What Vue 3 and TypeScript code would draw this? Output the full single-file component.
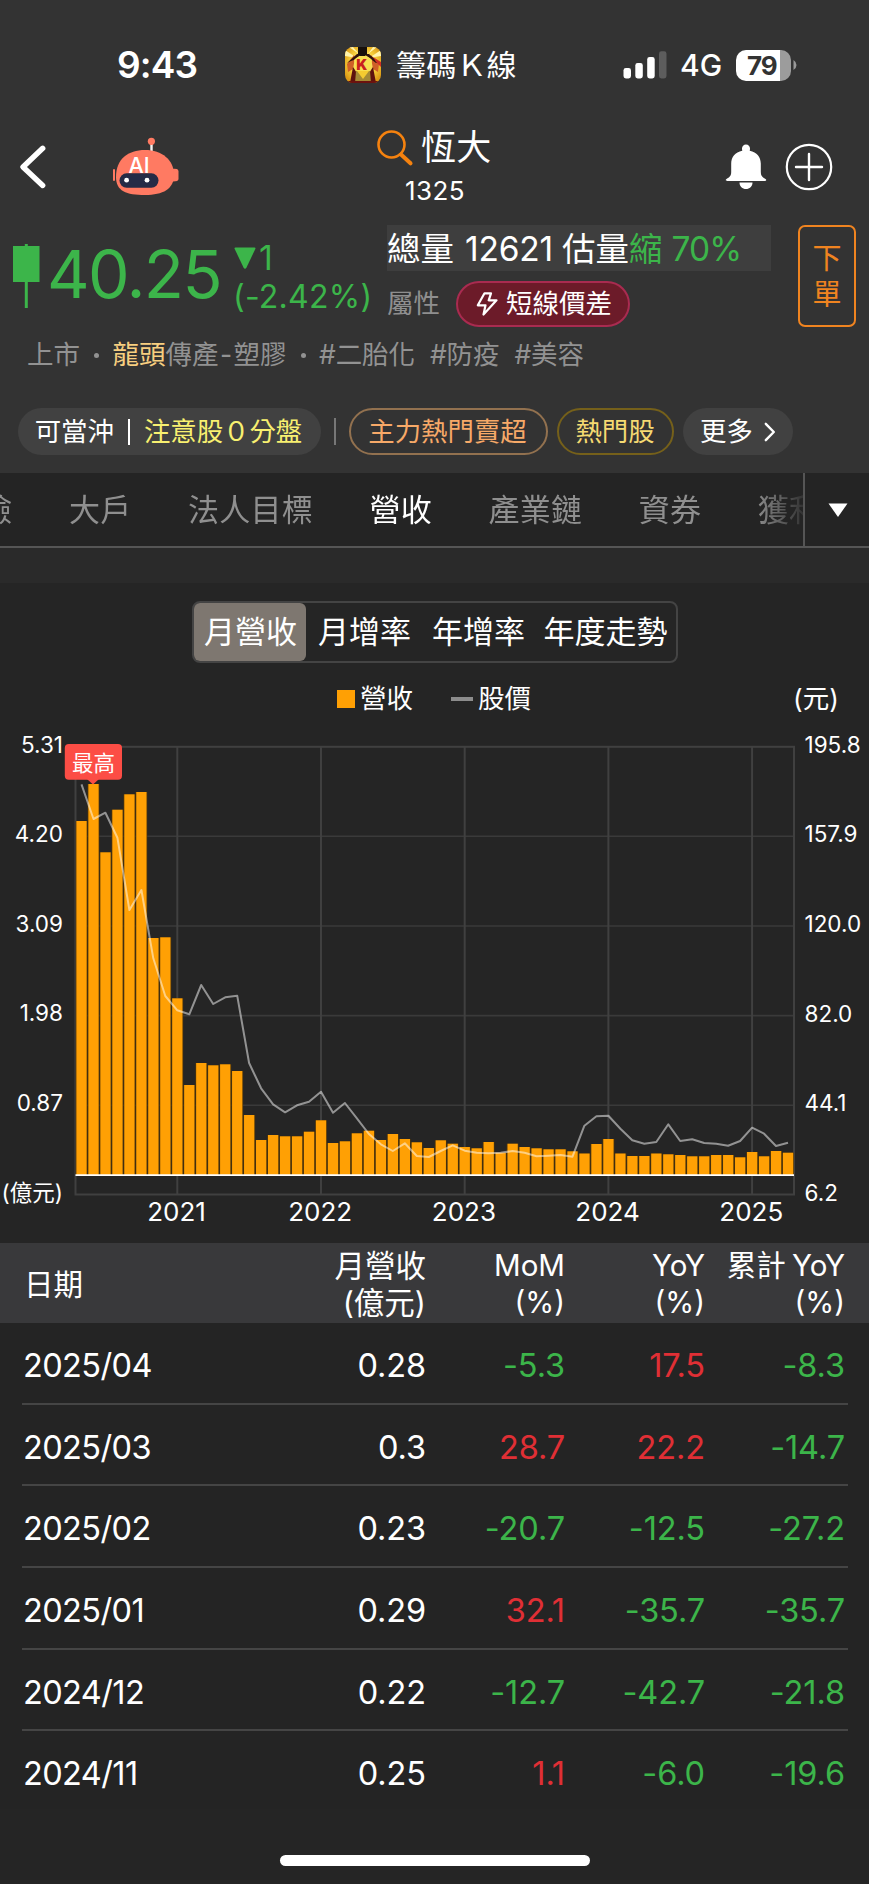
<script setup lang="ts">
interface Row {
  date: string
  revenue: string
  mom: string
  yoy: string
  total: string
}

const rows: Row[] = [
  { date: '2025/04', revenue: '0.28', mom: '-5.3', yoy: '17.5', total: '-8.3' },
  { date: '2025/03', revenue: '0.3', mom: '28.7', yoy: '22.2', total: '-14.7' },
  { date: '2025/02', revenue: '0.23', mom: '-20.7', yoy: '-12.5', total: '-27.2' },
  { date: '2025/01', revenue: '0.29', mom: '32.1', yoy: '-35.7', total: '-35.7' },
  { date: '2024/12', revenue: '0.22', mom: '-12.7', yoy: '-42.7', total: '-21.8' },
  { date: '2024/11', revenue: '0.25', mom: '1.1', yoy: '-6.0', total: '-19.6' },
]

const tone = (v: string): string => (v.startsWith('-') ? 'down' : 'up')

// Chart geometry: the svg starts 730px down the page, one slot per month
const left = 75.5
const slot = 11.975
const base = 445
const centre = (i: number): number => left + slot * (i + 0.5)

const barHeights: number[] = [
  354, 391, 322.7, 365.3, 380.7, 383, 237, 237.7, 176.7, 90, 112, 109.7, 110.7, 104, 60, 35, 40, 38.7, 38.7, 43.3,
  54.7, 32, 33.7, 41.7, 44.3, 35, 41, 36, 32.7, 27, 34.7, 31.3, 28, 26.7, 33, 22.3, 31.3, 28, 26.7, 25.7,
  25.7, 23.7, 21.5, 31, 36, 21.5, 19, 19, 21.5, 20.7, 20, 18.7, 18.7, 20, 20, 17.7, 23, 18.7, 24, 22.3,
]

const priceY: number[] = [
  54.3, 89, 82.7, 107.7, 180, 160, 228.3, 266, 280.3, 284.3, 255, 274, 267.3, 265.7, 333, 358.3, 374.3, 382.3, 375.3, 371.7,
  361.7, 382.7, 373, 388.3, 404, 414.3, 421, 413.3, 426, 427, 421, 415.3, 420.7, 422.7, 423.3, 422.7, 421, 422.7, 426.3, 425.7,
  425, 426.7, 395.7, 386.3, 385.7, 398.7, 410.3, 413.7, 412, 394.3, 411, 409.3, 413, 413.7, 415.7, 411, 397.7, 403.7, 416, 412.7,
]

const pricePoints: string = priceY.map((y, i) => `${centre(i).toFixed(1)},${y}`).join(' ')

const grid: number[] = [106.3, 196, 285.6, 375.2]
const years = [8, 20, 32, 44, 56].map((slotIndex, i) => ({ x: centre(slotIndex), label: String(2021 + i) }))
const leftLabels = ['5.31', '4.20', '3.09', '1.98', '0.87'].map((t, i) => ({ t, y: 22.6 + i * 89.5 }))
const rightLabels = ['195.8', '157.9', '120.0', '82.0', '44.1', '6.2'].map((t, i) => ({ t, y: 22.8 + i * 89.6 }))

const tabs: string[] = ['風險', '大戶', '法人目標', '營收', '產業鏈', '資券', '獲利']
const segments: string[] = ['月營收', '月增率', '年增率', '年度走勢']
</script>

<template>
  <div class="screen">
    <header class="head">
      <div class="status">
        <div class="clock">9:43</div>
        <svg class="appicon" viewBox="0 0 36 36">
          <defs>
            <clipPath id="iconclip"><rect width="36" height="36" rx="8" /></clipPath>
            <radialGradient id="sun" cx="50%" cy="45%" r="60%">
              <stop offset="0" stop-color="#fff3a0" />
              <stop offset="0.6" stop-color="#f6cf3c" />
              <stop offset="1" stop-color="#dc9a16" />
            </radialGradient>
          </defs>
          <g clip-path="url(#iconclip)">
            <rect width="36" height="36" fill="url(#sun)" />
            <path d="M0 3L12 11L0 9Z M36 3L24 11L36 9Z M8 0L14 7L4 0Z M28 0L23 7L32 0Z" fill="#fff4ac" />
            <path d="M9 8L2 17L3 25L8 22L10 11Z M26 8L34 17L33 25L28 22L26 11Z" fill="#cf5f27" />
            <path d="M2 16L12 7L17 7L9 13L6 14Z M34 16L24 7L19 7L27 13L31 16Z" fill="#30130d" />
            <path d="M28 10L36 15V20L31 15Z" fill="#cf2f25" />
            <path d="M8 20L12 26L11 36H5Z M28 20L24 26L25 36H31Z" fill="#5d120e" />
            <path d="M9 13Q18 4 27 13L25 25H11Z" fill="#f8df50" />
            <path d="M13 0H22V7L20 9H15L13 7Z" fill="#17100b" />
            <path d="M11 24H25L26 36H10Z" fill="#a58b35" />
            <path d="M12 24H24L18 32Z" fill="#f4cb30" />
            <text x="16.800" y="23" text-anchor="middle" font-size="14.500" font-weight="900" fill="#c9201f" font-family="Inter, sans-serif">K</text>
            <rect y="34" width="36" height="2" fill="#6b120e" />
          </g>
        </svg>
        <div class="appname">籌碼Ｋ線</div>
        <svg class="signal" viewBox="0 0 44 28">
          <rect x="0.5" y="17" width="7.5" height="10.5" rx="2.4" fill="#fff" />
          <rect x="12.3" y="12" width="7.5" height="15.5" rx="2.4" fill="#fff" />
          <rect x="24.2" y="6" width="7.5" height="21.5" rx="2.4" fill="#fff" />
          <rect x="36" y="0.3" width="7.5" height="27.2" rx="2.4" fill="#5d5d5d" />
        </svg>
        <div class="net">4G</div>
        <div class="battery"><span>79</span></div>
        <svg class="nub" viewBox="0 0 4 10"><path d="M0.5 0Q3.5 2 3.5 5Q3.5 8 0.5 10Z" fill="#9a9a9a" /></svg>
      </div>

      <div class="nav">
        <svg class="back" viewBox="0 0 30 46"><path d="M24.700 4.300L5 23L24.700 41.500" fill="none" stroke="#fff" stroke-width="5.4" stroke-linecap="round" stroke-linejoin="round" /></svg>
        <svg class="robot" viewBox="0 0 68 60">
          <rect x="38.3" y="6" width="2.4" height="11" fill="#f2f2f2" />
          <circle cx="39.4" cy="4.3" r="3.6" fill="#ff7a62" />
          <rect x="1" y="32" width="2" height="12" rx="1" fill="#ff7a62" />
          <path d="M60 32Q62 31.300 65 32Q66.500 32.500 66.500 34.500V42Q66.500 44.500 61 44.500H58Z" fill="#ff7a62" />
          <path d="M4 40C4 22 16 13 33 13C50 13 62 23 62 38C62 52 51 58 33 58C14 58 4 54 4 40Z" fill="#ff7a62" />
          <rect x="7.5" y="36.300" width="39" height="14.500" rx="7.200" fill="#252b46" />
          <circle cx="14.600" cy="43.200" r="2.400" fill="#fff" />
          <circle cx="35" cy="43.200" r="2.400" fill="#fff" />
          <text x="27" y="35.800" text-anchor="middle" font-family="Inter, sans-serif" font-size="21.500" font-weight="500" fill="#fff">AI</text>
        </svg>
        <div class="title">
          <div class="name">
            <svg viewBox="0 0 38 38"><circle cx="15.500" cy="15.500" r="13" fill="none" stroke="#f5820f" stroke-width="2.600" /><path d="M25 25.500L34.500 34.300" stroke="#f5820f" stroke-width="4" stroke-linecap="round" /></svg>
            <span>恆大</span>
          </div>
          <div class="code">1325</div>
        </div>
        <svg class="bell" viewBox="0 0 42 46">
          <path d="M21 0.500C18.700 0.500 17 2.200 17 4.500C17 5.500 17.100 6.300 17.300 6.700C10 8.200 6.300 13 6.200 19.500V28C6.200 32 4.500 33.200 1.500 35C0.300 35.800 0.600 37 2 37H40C41.400 37 41.700 35.800 40.500 35C37.500 33.200 35.800 32 35.800 28V19.500C35.700 13 32 8.200 24.700 6.700C24.900 6.300 25 5.500 25 4.500C25 2.200 23.300 0.500 21 0.500Z M14.500 38.500H27.500C27.500 42.500 24.600 45 21 45C17.400 45 14.500 42.500 14.500 38.500Z" fill="#fff" />
        </svg>
        <svg class="plus" viewBox="0 0 48 48"><circle cx="24" cy="24" r="22.200" fill="none" stroke="#fff" stroke-width="2.200" /><path d="M11 24H37M24 11V37" stroke="#fff" stroke-width="2.400" stroke-linecap="round" /></svg>
      </div>

      <div class="quote">
        <svg class="candle" viewBox="0 0 28 66"><path d="M14.300 0V64" stroke="#3cb54a" stroke-width="3" /><rect x="1" y="2" width="26.500" height="36" fill="#3cb54a" /></svg>
        <div class="price">40.25</div>
        <div class="change">
          <div class="diff">
            <svg viewBox="0 0 22 22"><path d="M1.500 0.500H20.500Q22 0.500 21.300 2L12.500 20.500Q11 23 9.500 20.500L0.700 2Q0 0.500 1.500 0.500Z" fill="#3cb54a" /></svg>
            <span>1</span>
          </div>
          <div class="pct">(-2.42%)</div>
        </div>
        <div class="facts">
          <div class="volume">總量<i class="v1">12621</i>估量<em>縮</em><i class="v2">70%</i></div>
          <div class="attr">
            <span class="attrname">屬性</span>
            <span class="trait">
              <svg viewBox="0 0 22 24"><path d="M8.500 1.300H15L12.700 8.300H20.500L7.500 22.500L9.500 13.300H1.800Z" fill="none" stroke="#fff" stroke-width="2.200" stroke-linejoin="round" /></svg>
              短線價差
            </span>
          </div>
        </div>
        <button class="order"><span>下</span><span>單</span></button>
      </div>

      <div class="tagline">
        <span>上市</span><b></b><span><em>龍頭</em>傳產</span><span class="dash">-</span><span>塑膠</span><b></b>
        <span class="hash">#二胎化</span><span class="hash">#防疫</span><span class="hash">#美容</span>
      </div>

      <div class="chips">
        <span class="chip day">可當沖<i></i><em>注意股０分盤</em></span>
        <i class="sep"></i>
        <span class="chip hot">主力熱門賣超</span>
        <span class="chip fav">熱門股</span>
        <span class="chip more">更多<svg viewBox="0 0 12 20"><path d="M1.800 1.800L9.800 10L1.800 18.200" fill="none" stroke="#fff" stroke-width="2.400" stroke-linecap="round" stroke-linejoin="round" /></svg></span>
      </div>
    </header>

    <nav class="tabs">
      <div class="tablist">
        <span v-for="t in tabs" :key="t" :class="{ on: t === '營收' }">{{ t }}</span>
      </div>
      <div class="drop"><svg viewBox="0 0 20 14"><path d="M0.500 0.500H19.500L10 14Z" fill="#fff" /></svg></div>
    </nav>
    <div class="strip"></div>

    <div class="segwrap">
      <div class="seg">
        <span v-for="(s, i) in segments" :key="s" :class="{ active: i === 0 }">{{ s }}</span>
      </div>
    </div>

    <div class="legend">
      <i class="sq"></i><span class="l1">營收</span><i class="ln"></i><span class="l2">股價</span><span class="unit">(元)</span>
    </div>

    <svg class="chart" width="869" height="513" viewBox="0 0 869 513">
      <g stroke="#3a3a3a" stroke-width="1.600">
        <line v-for="g in grid" :key="g" x1="75.500" x2="794" :y1="g" :y2="g" />
      </g>
      <g stroke="#404040" stroke-width="2">
        <line v-for="y in years" :key="y.label" :x1="y.x" :x2="y.x" y1="17" y2="464.500" />
        <rect x="75.500" y="16.800" width="718.500" height="447.700" fill="none" />
      </g>
      <g fill="#4e3409" opacity="0.9">
        <rect v-for="(h, i) in barHeights" :key="i" :x="centre(i) - 5.987" :y="base - h" width="11.975" :height="h" />
      </g>
      <g fill="#ffa004">
        <rect v-for="(h, i) in barHeights" :key="i" :x="centre(i) - 5.100" :y="base - h" width="10.300" :height="h" />
      </g>
      <line x1="75.500" x2="794" y1="445.200" y2="445.200" stroke="#fff" stroke-width="1.800" />
      <polyline :points="pricePoints" fill="none" stroke="#fff" stroke-opacity="0.5" stroke-width="2" stroke-linejoin="round" />
      <path d="M87 49L93 54.500L99 49Z" fill="#fc4d45" />
      <rect x="64.800" y="14" width="57.200" height="35.800" rx="4" fill="#fc4d45" />
      <text class="lab" x="93.500" y="41" font-size="21.500" text-anchor="middle">最高</text>
      <text v-for="l in leftLabels" :key="l.t" class="lab" x="63" :y="l.y" font-size="22.500" text-anchor="end">{{ l.t }}</text>
      <text class="lab" x="63" y="471" font-size="22.500" text-anchor="end">(億元)</text>
      <text v-for="l in rightLabels" :key="l.t" class="lab" x="804.500" :y="l.y" font-size="22.500">{{ l.t }}</text>
      <text v-for="y in years" :key="y.label" class="lab" :x="y.x - 0.800" y="490.500" font-size="26" text-anchor="middle">{{ y.label }}</text>
    </svg>

    <div class="table">
      <div class="thead">
        <div class="date">日期</div>
        <div class="big">月營收<br />(億元)</div>
        <div>MoM<br />(%)</div>
        <div>YoY<br />(%)</div>
        <div class="wide">累計 YoY<br />(%)</div>
      </div>
      <div v-for="r in rows" :key="r.date" class="trow">
        <div class="date">{{ r.date }}</div>
        <div>{{ r.revenue }}</div>
        <div :class="tone(r.mom)">{{ r.mom }}</div>
        <div :class="tone(r.yoy)">{{ r.yoy }}</div>
        <div :class="tone(r.total)">{{ r.total }}</div>
      </div>
    </div>
    <footer class="home"><i></i></footer>
  </div>
</template>

<style>
body {
  margin: 0;
  background: #252525;
}
</style>

<style scoped>
.screen {
  width: 869px;
  height: 1884px;
  overflow: hidden;
  background: #252525;
  color: #fff;
  font-family: Inter, 'Noto Sans CJK TC', sans-serif;
  font-weight: 400;
  line-height: 1.2;
  display: flex;
  flex-direction: column;
}
.screen * {
  box-sizing: border-box;
}
svg {
  display: block;
  flex: none;
}
i,
em {
  font-style: normal;
}
span,
div {
  white-space: nowrap;
}
.head {
  height: 473px;
  background: #333;
  flex: none;
}
.status {
  height: 130px;
  display: flex;
  align-items: center;
}
.clock {
  width: 228px;
  padding-left: 117px;
  margin-right: 117px;
  font-size: 37px;
  font-weight: 600;
  letter-spacing: -0.9px;
}
.appicon {
  width: 36px;
  height: 36px;
}
.appname {
  margin-left: 15px;
  width: 227px;
  font-size: 30px;
  letter-spacing: 0.2px;
}
.signal {
  width: 44px;
  height: 28px;
}
.net {
  width: 56px;
  padding-left: 13px;
  font-size: 30px;
  font-weight: 500;
}
.battery {
  width: 55px;
  height: 31px;
  border-radius: 10px;
  background: linear-gradient(90deg, #fff 44px, #9c9c9c 44px);
  color: #333;
  font-size: 26px;
  font-weight: 700;
  line-height: 31px;
  padding-left: 11px;
  letter-spacing: -1.2px;
  margin-left: 13px;
}
.nub {
  width: 4px;
  height: 10px;
  margin-left: 2px;
}
.nav {
  height: 95px;
  display: flex;
}
.back {
  width: 30px;
  height: 46px;
  margin: 14px 64px 0 18px;
}
.robot {
  width: 68px;
  height: 60px;
  margin-top: 7px;
}
.title {
  margin-left: 196px;
  width: 118px;
}
.name {
  height: 35px;
  display: flex;
  align-items: center;
  font-size: 35px;
  line-height: 35px;
  letter-spacing: 0.3px;
}
.name svg {
  width: 38px;
  height: 38px;
  margin-right: 7px;
}
.code {
  text-align: center;
  font-size: 26px;
  line-height: 30px;
  margin-top: 11px;
  letter-spacing: 0.4px;
}
.bell {
  width: 42px;
  height: 46px;
  margin: 14px 0 0 231px;
}
.plus {
  width: 48px;
  height: 48px;
  margin: 13px 0 0 18px;
}
.quote {
  height: 102px;
  display: flex;
}
.candle {
  width: 28px;
  height: 66px;
  margin: 19px 0 0 12px;
}
.price {
  width: 186px;
  margin-left: 7px;
  margin-top: 14px;
  color: #3cb54a;
  font-size: 66px;
  line-height: 70px;
  letter-spacing: -1.6px;
}
.change {
  width: 154px;
  color: #3cb54a;
}
.diff {
  display: flex;
  height: 34px;
  margin-top: 16px;
  align-items: center;
  font-size: 34px;
  line-height: 34px;
}
.diff svg {
  width: 22px;
  height: 22px;
  margin: 0 3px 0 1px;
}
.pct {
  font-size: 32px;
  line-height: 34px;
  margin-top: 5px;
  letter-spacing: 0.25px;
}
.facts {
  width: 383px;
}
.volume {
  display: flex;
  height: 46px;
  width: 384px;
  background: #3e3e3e;
  font-size: 33.5px;
  line-height: 48px;
}
.volume em,
.volume .v2 {
  color: #3cb54a;
}
.v1 {
  width: 108px;
  padding-left: 11px;
  letter-spacing: -0.2px;
}
.v2 {
  padding-left: 9px;
  letter-spacing: -0.9px;
}
.attr {
  display: flex;
  height: 46px;
  margin-top: 10px;
  align-items: center;
  font-size: 26.5px;
}
.attrname {
  color: #8f8f8f;
  width: 69px;
}
.trait {
  width: 174px;
  height: 46px;
  border: 2px solid #a92b50;
  border-radius: 23px;
  background: #6c1b29;
  display: flex;
  align-items: center;
  padding-left: 18px;
}
.trait svg {
  width: 22px;
  height: 24px;
  margin-right: 8px;
}
.order {
  width: 58px;
  height: 102px;
  margin-left: 28px;
  padding: 2px 0 0;
  border: 2px solid #f08420;
  border-radius: 7px;
  background: transparent;
  color: #f08420;
  font: inherit;
  font-size: 29px;
  line-height: 36px;
  display: flex;
  flex-direction: column;
  align-items: center;
  justify-content: center;
}
.tagline {
  margin-top: 12px;
  height: 32px;
  padding-left: 27px;
  display: flex;
  align-items: center;
  font-size: 26.5px;
  color: #929292;
}
.tagline b {
  width: 5px;
  height: 5px;
  border-radius: 50%;
  background: #929292;
  margin: 0 13.5px 0 14px;
}
.tagline em {
  color: #f8cf80;
}
.dash {
  width: 15px;
  text-align: center;
}
.hash {
  margin-right: 15px;
  letter-spacing: -0.1px;
}
.chips {
  margin-top: 37px;
  padding-left: 18px;
  display: flex;
  align-items: center;
  font-size: 26.4px;
}
.chip {
  height: 47px;
  border-radius: 24px;
  display: flex;
  align-items: center;
  justify-content: center;
  margin-right: 9px;
}
.day {
  width: 303px;
  background: #414141;
  margin-right: 13px;
  padding-right: 2px;
}
.day i {
  width: 2px;
  height: 26px;
  background: #fff;
  margin: 0 14px;
}
.day em {
  color: #f8f070;
}
.sep {
  width: 2px;
  height: 27px;
  background: #777;
  margin-right: 13px;
}
.hot {
  width: 199px;
  border: 2px solid #92714f;
  color: #f7a968;
  padding-right: 2px;
}
.fav {
  width: 117px;
  border: 2px solid #75601a;
  color: #f5da72;
  padding-right: 1px;
}
.more {
  width: 110px;
  background: #414141;
}
.more svg {
  width: 12px;
  height: 20px;
  margin-left: 11px;
}
.tabs {
  height: 75px;
  flex: none;
  background: #242424;
  border-bottom: 2px solid #555;
  display: flex;
}
.tablist {
  width: 803px;
  height: 73px;
  flex: none;
  overflow: hidden;
  display: flex;
  align-items: center;
  gap: 56.5px;
  font-size: 31px;
  letter-spacing: 0.25px;
  color: #8f8f8f;
  -webkit-mask-image: linear-gradient(90deg, #000 755px, rgba(0, 0, 0, 0.15) 803px);
  mask-image: linear-gradient(90deg, #000 755px, rgba(0, 0, 0, 0.15) 803px);
}
.tablist span:first-child {
  margin-left: -50px;
}
.tablist .on {
  color: #fff;
}
.drop {
  width: 66px;
  height: 73px;
  border-left: 2px solid #555;
  display: flex;
  align-items: center;
  padding-left: 23px;
}
.drop svg {
  width: 20px;
  height: 14px;
}
.strip {
  height: 35px;
  flex: none;
  background: #2a2a2a;
}
.segwrap {
  height: 81px;
  flex: none;
  padding: 18px 0 0 192px;
}
.seg {
  width: 486px;
  height: 62px;
  border: 2px solid #444;
  border-radius: 8px;
  display: flex;
  font-size: 31px;
  line-height: 57px;
}
.seg span {
  width: 114px;
  text-align: center;
  padding-left: 3px;
}
.seg span:last-child {
  width: 142px;
  padding-left: 1px;
}
.seg .active {
  width: 112px;
  padding-left: 1px;
  background: #7e7770;
  border-radius: 6px;
}
.legend {
  flex: none;
  padding: 19px 0 0 337px;
  display: flex;
  align-items: center;
  height: 50px;
  margin-bottom: 16px;
  font-size: 26.5px;
}
.sq {
  width: 18px;
  height: 18px;
  background: #ffa004;
}
.l1 {
  margin-left: 5px;
  width: 91px;
}
.ln {
  width: 22px;
  height: 4px;
  background: #8c8c8c;
}
.l2 {
  margin-left: 5px;
  width: 315px;
}
.chart {
  height: 513px;
}
.lab {
  font-family: Inter, 'Noto Sans CJK TC', sans-serif;
  fill: #fff;
}
.table {
  flex: none;
  height: 566px;
  background: #242424;
}
.thead,
.trow {
  display: grid;
  grid-template-columns: 180px 222px 139px 140px 140px;
  text-align: right;
}
.thead {
  height: 80px;
  padding: 2px 0 0 24px;
  background: #39393b;
  align-items: center;
  font-size: 29.5px;
  line-height: 37px;
}
.big {
  font-size: 30.5px;
}
.wide {
  word-spacing: -2px;
}
.trow {
  height: 81.7px;
  margin: 0 21px 0 22px;
  padding-left: 2px;
  border-bottom: 2px solid #454545;
  line-height: 85px;
  font-size: 32.5px;
}
.trow:last-child {
  border: none;
}
.trow div {
  letter-spacing: -0.1px;
}
.date {
  text-align: left;
}
.trow .date {
  letter-spacing: -0.6px;
}
.trow .date {
  margin-left: -1px;
}
.up {
  color: #e02f35;
}
.down {
  color: #3cb54a;
}
.home {
  padding-top: 46px;
  display: flex;
  justify-content: center;
}
.home i {
  width: 310px;
  height: 11px;
  border-radius: 6px;
  background: #fff;
}
</style>
